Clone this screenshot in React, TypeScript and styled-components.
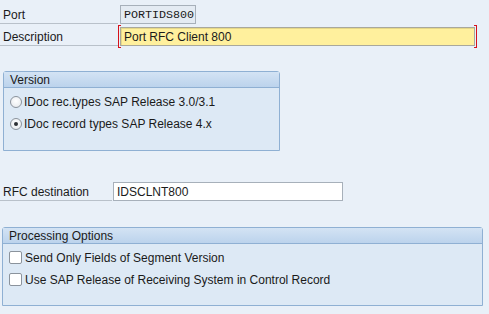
import styled, { createGlobalStyle } from "styled-components";

const GlobalStyle = createGlobalStyle`
  html, body {
    margin: 0;
    padding: 0;
    background: #e9f0f8;
  }
  body {
    font-family: "Liberation Sans", Arial, sans-serif;
    font-size: 12px;
    color: #1a1a1a;
  }
`;

const Screen = styled.div`
  width: 489px;
  height: 314px;
  padding-top: 5px;
  box-sizing: border-box;
  display: flex;
  flex-direction: column;
`;

const Row = styled.div<{ $mt?: number }>`
  display: flex;
  align-items: stretch;
  height: 19px;
  margin-top: ${(p) => p.$mt ?? 0}px;
`;

const Label = styled.div<{ $w: number }>`
  width: ${(p) => p.$w}px;
  box-sizing: border-box;
  padding-left: 3px;
  padding-top: 1px;
  display: flex;
  align-items: center;
  border-bottom: 1px solid #b9c1ca;
  flex-shrink: 0;
`;

const Field = styled.div<{ $w: number; $ml?: number; $mono?: boolean; $bg?: string }>`
  width: ${(p) => p.$w}px;
  margin-left: ${(p) => p.$ml ?? 2}px;
  box-sizing: border-box;
  border: 1px solid ${(p) => (p.$bg === "yellow" ? "#a9a89c" : "#a7b0ba")};
  background: ${(p) =>
    p.$bg === "yellow" ? "#fff09d" : p.$bg === "white" ? "#ffffff" : "#e4ebf3"};
  box-shadow: ${(p) =>
    p.$bg === "yellow" ? "inset 1px 1px 0 #e6d888" : "none"};
  display: flex;
  align-items: center;
  padding-left: ${(p) => (p.$mono ? 3 : 3)}px;
  padding-top: 1px;
  font-family: ${(p) =>
    p.$mono ? '"Liberation Mono", "Courier New", monospace' : "inherit"};
  font-size: ${(p) => (p.$mono ? "11.7px" : "12px")};
  white-space: nowrap;
`;

const Required = styled.div`
  position: relative;
  display: flex;
  padding: 0 2px;
  &::before,
  &::after {
    content: "";
    position: absolute;
    top: -2px;
    bottom: -2px;
    width: 2px;
    border: 1px solid #d6121b;
  }
  &::before {
    left: 0;
    border-right: none;
  }
  &::after {
    right: 0;
    border-left: none;
  }
`;

const Group = styled.div<{ $w: number; $ml: number; $mt: number }>`
  width: ${(p) => p.$w}px;
  margin-left: ${(p) => p.$ml}px;
  margin-top: ${(p) => p.$mt}px;
  box-sizing: border-box;
  border: 1px solid #8fb0d3;
  border-radius: 3px 3px 0 0;
  background: #dde9f5;
`;

const GroupHeader = styled.div`
  height: 16px;
  padding-left: 6px;
  padding-top: 1px;
  box-sizing: border-box;
  display: flex;
  align-items: center;
  background: linear-gradient(#d3e3f4, #bcd3ec);
  border-bottom: 1px solid #8fb0d3;
`;

const GroupBody = styled.div<{ $h: number }>`
  height: ${(p) => p.$h}px;
  padding: 4px 0 0 6px;
  box-sizing: border-box;
  display: flex;
  flex-direction: column;
  gap: 3px;
`;

const Option = styled.div`
  height: 19px;
  display: flex;
  align-items: center;
  gap: 2px;
`;

const Radio = styled.span<{ $on?: boolean }>`
  width: 12px;
  height: 12px;
  box-sizing: border-box;
  border-radius: 50%;
  border: 1px solid #8b939c;
  background: radial-gradient(circle at 50% 40%, #ffffff, #e3e6ea);
  display: flex;
  align-items: center;
  justify-content: center;
  &::after {
    content: "";
    width: 4px;
    height: 4px;
    border-radius: 50%;
    background: #2c2f33;
    display: ${(p) => (p.$on ? "block" : "none")};
  }
`;

const Check = styled.span`
  width: 13px;
  height: 13px;
  box-sizing: border-box;
  border: 1px solid #8b939c;
  border-radius: 2px;
  background: #ffffff;
  margin-right: 1px;
`;

export default function App() {
  return (
    <>
      <GlobalStyle />
      <Screen>
        <Row>
          <Label $w={118}>Port</Label>
          <Field $w={76} $mono>
            PORTIDS800
          </Field>
        </Row>
        <Row $mt={3}>
          <Label $w={118}>Description</Label>
          <Required>
            <Field $w={355} $ml={0} $bg="yellow">
              Port RFC Client 800
            </Field>
          </Required>
        </Row>

        <Group $w={277} $ml={3} $mt={25}>
          <GroupHeader>Version</GroupHeader>
          <GroupBody $h={62}>
            <Option>
              <Radio />
              IDoc rec.types SAP Release 3.0/3.1
            </Option>
            <Option>
              <Radio $on />
              IDoc record types SAP Release 4.x
            </Option>
          </GroupBody>
        </Group>

        <Row $mt={31}>
          <Label $w={112}>RFC destination</Label>
          <Field $w={230} $ml={1} $bg="white">
            IDSCLNT800
          </Field>
        </Row>

        <Group $w={481} $ml={2} $mt={26}>
          <GroupHeader>Processing Options</GroupHeader>
          <GroupBody $h={61}>
            <Option>
              <Check />
              Send Only Fields of Segment Version
            </Option>
            <Option>
              <Check />
              Use SAP Release of Receiving System in Control Record
            </Option>
          </GroupBody>
        </Group>
      </Screen>
    </>
  );
}
